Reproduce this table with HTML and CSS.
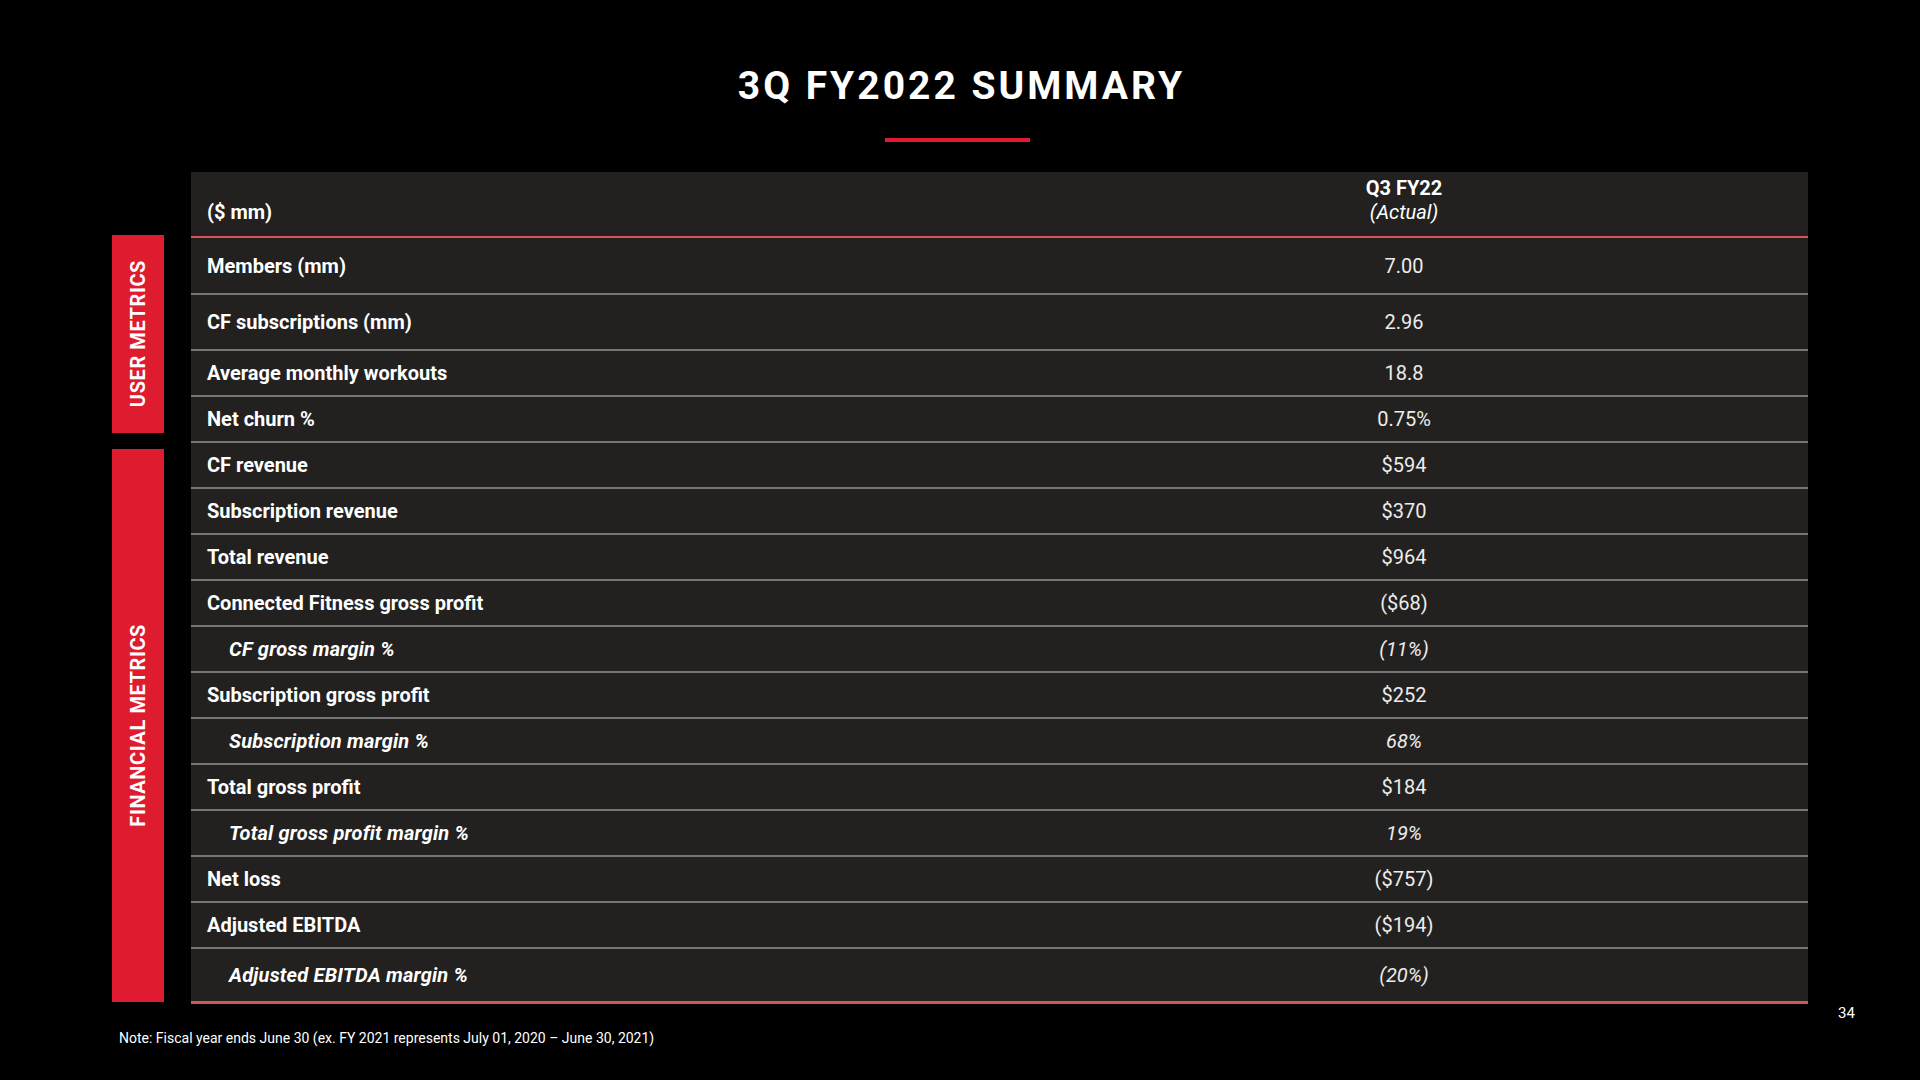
FILE: index.html
```html
<!DOCTYPE html>
<html lang="en">
<head>
<meta charset="utf-8">
<title>3Q FY2022 Summary</title>
<link rel="stylesheet" href="styles.css">
</head>
<body>
<div class="slide">
  <header class="head">
    <h1 class="title">3Q FY2022 SUMMARY</h1>
    <div class="title-rule"></div>
  </header>

  <main class="main">
    <aside class="side">
      <div class="side-box side-user"><span class="side-text">USER METRICS</span></div>
      <div class="side-box side-fin"><span class="side-text">FINANCIAL METRICS</span></div>
    </aside>

    <section class="table">
      <div class="row head-row">
        <div class="cell label">($ mm)</div>
        <div class="cell value head-value"><strong>Q3 FY22</strong><em>(Actual)</em></div>
      </div>
      <div class="row r1"><div class="cell label">Members (mm)</div><div class="cell value">7.00</div></div>
      <div class="row r2"><div class="cell label">CF subscriptions (mm)</div><div class="cell value">2.96</div></div>
      <div class="row"><div class="cell label">Average monthly workouts</div><div class="cell value">18.8</div></div>
      <div class="row"><div class="cell label">Net churn %</div><div class="cell value">0.75%</div></div>
      <div class="row"><div class="cell label">CF revenue</div><div class="cell value">$594</div></div>
      <div class="row"><div class="cell label">Subscription revenue</div><div class="cell value">$370</div></div>
      <div class="row"><div class="cell label">Total revenue</div><div class="cell value">$964</div></div>
      <div class="row"><div class="cell label">Connected Fitness gross profit</div><div class="cell value">($68)</div></div>
      <div class="row sub"><div class="cell label">CF gross margin %</div><div class="cell value">(11%)</div></div>
      <div class="row"><div class="cell label">Subscription gross profit</div><div class="cell value">$252</div></div>
      <div class="row sub"><div class="cell label">Subscription margin %</div><div class="cell value">68%</div></div>
      <div class="row"><div class="cell label">Total gross profit</div><div class="cell value">$184</div></div>
      <div class="row sub"><div class="cell label">Total gross profit margin %</div><div class="cell value">19%</div></div>
      <div class="row"><div class="cell label">Net loss</div><div class="cell value">($757)</div></div>
      <div class="row"><div class="cell label">Adjusted EBITDA</div><div class="cell value">($194)</div></div>
      <div class="row sub last"><div class="cell label">Adjusted EBITDA margin %</div><div class="cell value">(20%)</div></div>
    </section>
  </main>

  <footer class="note">Note: Fiscal year ends June 30 (ex. FY 2021 represents July 01, 2020 – June 30, 2021)</footer>
  <div class="page-num">34</div>
</div>
</body>
</html>
```

FILE: styles.css
```css
* { box-sizing: border-box; }

html, body {
  margin: 0;
  padding: 0;
  background: #000;
}

body {
  font-family: Roboto, "Liberation Sans", Arial, sans-serif;
  color: #fff;
}

.slide {
  position: relative;
  width: 1920px;
  height: 1080px;
  overflow: hidden;
  background: #000;
}

.head {
  display: flex;
  flex-direction: column;
  align-items: center;
  padding-top: 67px;
}

.title {
  margin: 0;
  font-size: 39px;
  line-height: 39px;
  font-weight: 700;
  letter-spacing: 3px;
  padding-left: 3px;
  color: #fff;
}

.title-rule {
  margin-top: 32px;
  margin-right: 5px;
  width: 145px;
  height: 4px;
  background: #df1b2f;
}

.main {
  display: flex;
  align-items: flex-start;
  margin-top: 30px;
  padding-left: 112px;
}

.side {
  display: flex;
  flex-direction: column;
  gap: 16px;
  width: 52px;
  padding-top: 63px;
  margin-right: 27px;
}

.side-box {
  background: #df1b2f;
  display: flex;
  align-items: center;
  justify-content: center;
}

.side-user { height: 198px; }
.side-fin { height: 553px; }

.side-text {
  writing-mode: vertical-rl;
  transform: rotate(180deg);
  font-size: 20px;
  font-weight: 700;
  letter-spacing: 0.6px;
  white-space: nowrap;
  color: #fff;
}

.table {
  width: 1617px;
  background: #222120;
  display: flex;
  flex-direction: column;
}

.row {
  display: flex;
  height: 46px;
  border-bottom: 2px solid #767676;
}

.row.head-row {
  height: 66px;
  border-bottom: 2px solid #d9535b;
  align-items: flex-end;
}

.row.r1 { height: 57px; }
.row.r2 { height: 56px; }
.row.last {
  height: 55px;
  border-bottom: 3px solid #d9535b;
}

.cell {
  display: flex;
  align-items: center;
  font-size: 20px;
  line-height: 24px;
}

.label {
  width: 807px;
  padding-left: 16px;
  font-weight: 700;
  color: #fff;
}

.value {
  flex: 1;
  justify-content: center;
  padding-left: 2px;
  font-weight: 400;
  color: #ececec;
}

.head-row .cell {
  align-self: flex-end;
  padding-bottom: 12px;
}

.head-value {
  flex-direction: column;
  align-items: center;
  color: #fff;
}

.head-value strong { font-weight: 700; }
.head-value em { font-style: italic; font-weight: 400; }

.row.sub .label {
  font-style: italic;
  padding-left: 38px;
  letter-spacing: 0.2px;
}

.row.sub .value {
  font-style: italic;
}

.note {
  margin-top: 26px;
  padding-left: 119px;
  font-size: 14px;
  line-height: 16px;
  color: #fff;
}

.page-num {
  position: absolute;
  left: 1838px;
  top: 1003px;
  font-size: 15px;
  line-height: 20px;
  color: #fff;
}
```
